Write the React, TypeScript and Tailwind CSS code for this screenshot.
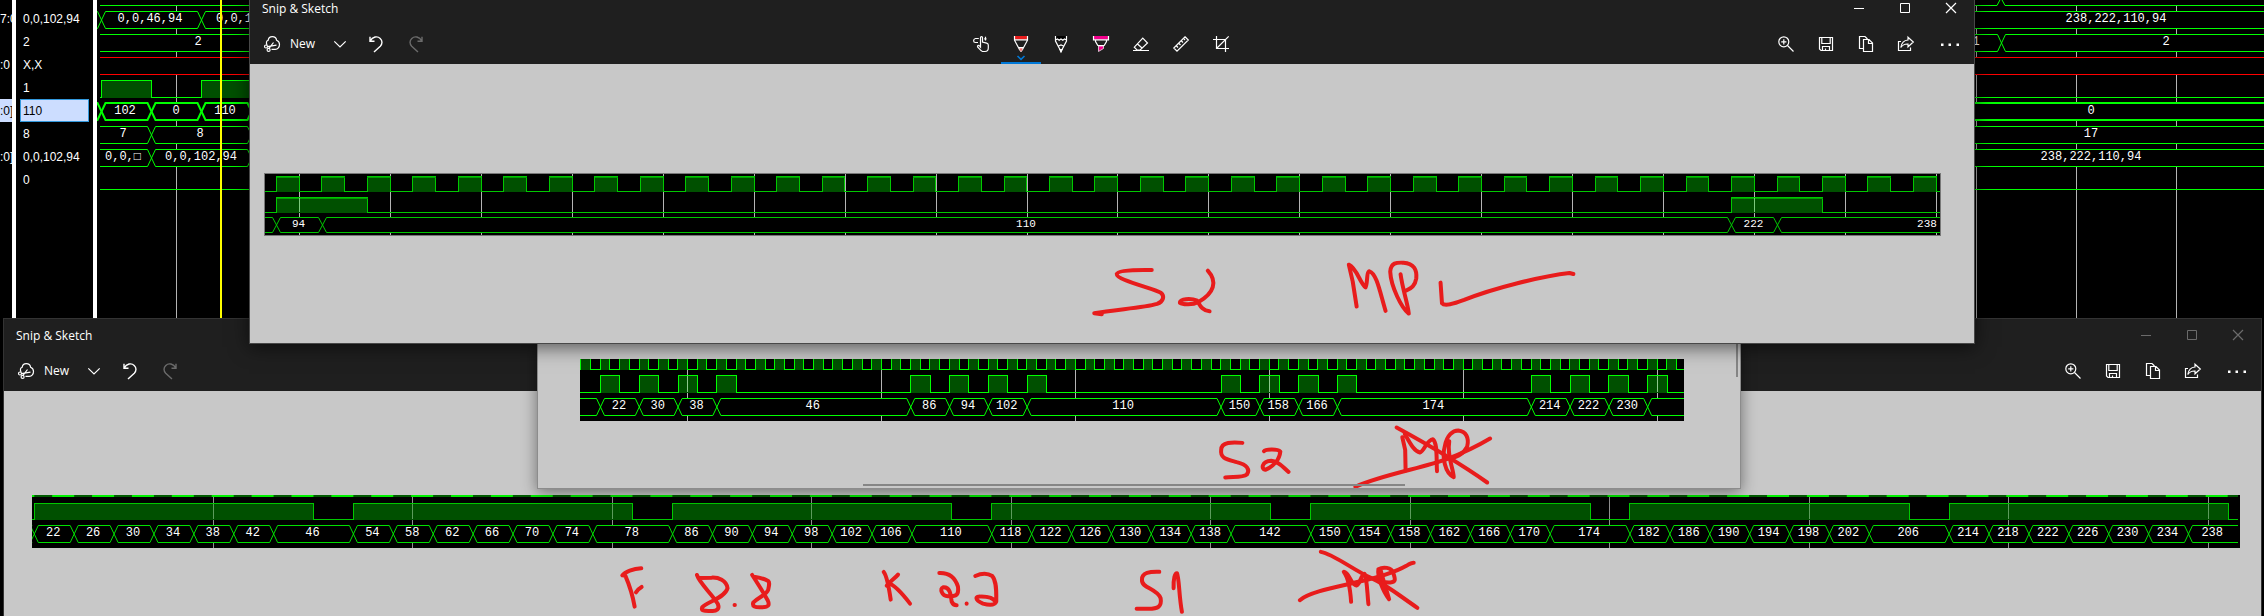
import { type ReactNode } from "react";

const GREEN = "#00ff00";
const MID = "#00c800";
const FILL = "#005000";
const GRID = "#b4b4b4";

type Segment = { from: number; to: number; label?: string; at?: number };

function range(n: number): number[] {
  return Array.from({ length: n }, (_, i) => i);
}

function GridLines({ xs, y1, y2, color = GRID }: { xs: number[]; y1: number; y2: number; color?: string }) {
  return (
    <path
      d={xs.map((x) => `M${x} ${y1}V${y2}`).join("")}
      stroke={color}
      strokeWidth={1}
      fill="none"
      shapeRendering="crispEdges"
    />
  );
}

function Label({ x, y, size = 12, children }: { x: number; y: number; size?: number; children: ReactNode }) {
  return (
    <text x={x} y={y} textAnchor="middle" fontSize={size} fill="#ffffff" className="font-['Liberation_Mono',monospace]">
      {children}
    </text>
  );
}

function Bus({
  segments,
  top,
  bottom,
  openStart = false,
  openEnd = false,
  width = 1,
  size = 12,
  color = GREEN,
}: {
  segments: Segment[];
  top: number;
  bottom: number;
  openStart?: boolean;
  openEnd?: boolean;
  width?: number;
  size?: number;
  color?: string;
}) {
  const mid = (top + bottom) / 2;
  const slant = 4;
  return (
    <g>
      {segments.map((s, i) => {
        const a = i === 0 && openStart;
        const b = i === segments.length - 1 && openEnd;
        const left = a ? `M${s.from} ${top}` : `M${s.from} ${mid}L${s.from + slant} ${top}`;
        const right = b ? `H${s.to}M${s.to} ${bottom}` : `H${s.to - slant}L${s.to} ${mid}L${s.to - slant} ${bottom}`;
        const close = a ? `H${s.from}` : `H${s.from + slant}L${s.from} ${mid}`;
        return (
          <g key={i}>
            <path
              d={`M${s.from + (a ? 0 : slant)} ${top}H${s.to - (b ? 0 : slant)}V${bottom}H${s.from + (a ? 0 : slant)}Z`}
              fill="#000"
            />
            <path d={left + right + close} stroke={color} strokeWidth={width} fill="none" />
          </g>
        );
      })}
      {segments.map((s, i) =>
        s.label ? (
          <Label key={i} x={s.at ?? (s.from + s.to) / 2 - 1} y={mid + 2} size={size}>
            {s.label}
          </Label>
        ) : null,
      )}
    </g>
  );
}

function Bits({
  pulses,
  from,
  to,
  high,
  low,
  color = GREEN,
  thickTop = false,
}: {
  pulses: [number, number][];
  from: number;
  to: number;
  high: number;
  low: number;
  color?: string;
  thickTop?: boolean;
}) {
  const line = `M${from} ${low}` + pulses.map(([a, b]) => `H${a}V${high}H${b}V${low}`).join("") + `H${to}`;
  return (
    <g shapeRendering="crispEdges">
      {pulses.map(([a, b]) => (
        <rect key={a} x={a} y={high} width={b - a} height={low - high} fill={FILL} />
      ))}
      <path d={line} fill="none" stroke={color} strokeWidth={1} />
      {thickTop && (
        <path d={pulses.map(([a, b]) => `M${a} ${high + 1}H${b}`).join("")} fill="none" stroke="#00a000" strokeWidth={1} />
      )}
    </g>
  );
}

function Ink({ transform, paths }: { transform?: string; paths: string[] }) {
  return (
    <g transform={transform} fill="none" stroke="#e81c1c" strokeLinecap="round" strokeLinejoin="round">
      {paths.map((d) => (
        <path key={d} d={d} strokeWidth={4} vectorEffect="non-scaling-stroke" />
      ))}
    </g>
  );
}

/* ---------- background simulator ---------- */

const SIGNALS = [
  { name: "7:0", value: "0,0,102,94" },
  { name: "", value: "2" },
  { name: ":0", value: "X,X" },
  { name: "", value: "1" },
  { name: ":0]", value: "110" },
  { name: "", value: "8" },
  { name: ":0]", value: "0,0,102,94" },
  { name: "", value: "0" },
];

function SimulatorWave() {
  const grid = range(21).map((i) => 176.5 + i * 100);
  return (
    <svg width={2167} height={616} viewBox="97 0 2167 616" className="block shrink-0" role="img" aria-label="Simulation waveform">
      <GridLines xs={grid} y1={0} y2={616} />
      {[-12, 11, 34, 57, 103, 126, 149].map((y) => (
        <rect key={y} x={97} y={y} width={2167} height={17} fill="#000" />
      ))}
      <path d="M100 5.5H1997L2001 -2M2001 -2L2005 5.5H2264M1997 -8L2001 0L2005 -8" stroke={GREEN} fill="none" />
      <Bus
        top={11.5}
        bottom={28.5}
        openEnd
        segments={[
          { from: 92, to: 101.5 },
          { from: 101.5, to: 201.5, label: "0,0,46,94", at: 150 },
          { from: 201.5, to: 302, label: "0,0,1", at: 234 },
          { from: 302, to: 2264, label: "238,222,110,94", at: 2116 },
        ]}
      />
      <Bus
        top={34.5}
        bottom={51.5}
        openStart
        openEnd
        segments={[
          { from: 100, to: 1900, label: "2", at: 198 },
          { from: 1900, to: 2001.5, label: "1", at: 1976 },
          { from: 2001.5, to: 2264, label: "2", at: 2166 },
        ]}
      />
      <path d="M100 57.5H2264M100 74.5H2264" stroke="#ff0000" />
      <Bits pulses={[[101.5, 151.5], [201.5, 251.5]]} from={100} to={2264} high={80.5} low={97.5} />
      <Bus
        top={103}
        bottom={120}
        width={2}
        openEnd
        segments={[
          { from: 90, to: 101.5 },
          { from: 101.5, to: 151.5, label: "102", at: 125 },
          { from: 151.5, to: 201.5, label: "0", at: 176 },
          { from: 201.5, to: 251.5, label: "110", at: 225 },
          { from: 251.5, to: 2264, label: "0", at: 2091 },
        ]}
      />
      <Bus
        top={126.5}
        bottom={143.5}
        openStart
        openEnd
        segments={[
          { from: 100, to: 151.5, label: "7", at: 123 },
          { from: 151.5, to: 251.5, label: "8", at: 200 },
          { from: 251.5, to: 2264, label: "17", at: 2091 },
        ]}
      />
      <Bus
        top={149.5}
        bottom={166.5}
        openStart
        openEnd
        segments={[
          { from: 100, to: 151.5, label: "0,0,□", at: 123 },
          { from: 151.5, to: 251.5, label: "0,0,102,94", at: 201 },
          { from: 251.5, to: 2264, label: "238,222,110,94", at: 2091 },
        ]}
      />
      <path d="M100 189.5H2264" stroke={GREEN} />
      <rect x={220} y={0} width={2} height={616} fill="#ffff00" />
    </svg>
  );
}

function Simulator() {
  return (
    <main className="flex h-full overflow-hidden bg-black font-['Liberation_Sans',sans-serif] text-xs text-white">
      <ul className="flex w-3 shrink-0 flex-col pt-[7px]">
        {SIGNALS.map((s, i) => (
          <li
            key={i}
            className={
              "flex h-[23px] items-center overflow-hidden whitespace-nowrap " +
              (i === 4 ? "bg-[#ccddff] text-black" : "")
            }
          >
            {s.name}
          </li>
        ))}
      </ul>
      <div className="w-1 shrink-0 bg-white" />
      <ul className="flex w-[77px] shrink-0 flex-col px-1 pt-[7px]">
        {SIGNALS.map((s, i) => (
          <li
            key={i}
            className={
              "flex h-[23px] items-center border px-0.5 whitespace-nowrap " +
              (i === 4 ? "border-[#3399dd] bg-[#ccddff] text-black" : "border-transparent")
            }
          >
            {s.value}
          </li>
        ))}
      </ul>
      <div className="w-1 shrink-0 bg-white" />
      <div className="flex-1 overflow-hidden">
        <SimulatorWave />
      </div>
    </main>
  );
}

/* ---------- icons ---------- */

function Icon({ children }: { children: ReactNode }) {
  return (
    <svg
      width={16}
      height={16}
      viewBox="0 0 16 16"
      fill="none"
      stroke="currentColor"
      strokeWidth={1.2}
      className="shrink-0 overflow-visible"
      aria-hidden="true"
    >
      {children}
    </svg>
  );
}

const SnipIcon = () => (
  <Icon>
    <path d="M3 9C1.800 6.500 2.500 4.800 4.200 4.200C4.500 1.900 6.300.6 8.300.6c2.200 0 4 1.500 4.300 3.700C14.400 5 15.500 6.600 15.500 8.600c0 2.600-1.700 4.700-4.200 4.700H7.500" />
    <circle cx="2" cy="10.500" r="1.500" />
    <circle cx="4.600" cy="13.900" r="1.500" />
    <path d="M3.500 10.700L12.500 9.200M5 12.400L9.500 6.500" />
  </Icon>
);
const ChevronIcon = () => (
  <Icon>
    <path d="M2.300 5.300L8 11L13.700 5.300" />
  </Icon>
);
const UndoIcon = () => (
  <Icon>
    <path d="M2 .8V5.300H6.500M2.200 5C4.500.5 9.500-.2 12.200 2.400C14.600 4.700 14.500 8 12.300 10.200L6 16" strokeWidth={1.4} />
  </Icon>
);
const RedoIcon = () => (
  <Icon>
    <path d="M14 .8V5.300H9.500M13.800 5C11.500.5 6.500-.2 3.800 2.400C1.400 4.700 1.500 8 3.700 10.200L10 16" strokeWidth={1.4} />
  </Icon>
);
const TouchIcon = () => (
  <Icon>
    <path d="M7.500 9V1.600a1 1 0 0 1 2 0V6l4.200 1.100c1 .3 1.600 1 1.600 2V12c0 2-1.300 3.500-3.300 3.500H9.500c-1.500-.5-3-2.500-4.800-4.500c-.8-1.500.8-2.200 1.800-1.200L7.500 11V8" />
    <path d="M5.800 2.500H2.500C0 3 0 6.500 2.500 6.500H5M11.200 2.800H13.500M12.500 4.500V.8" />
  </Icon>
);
const PenIcon = () => (
  <Icon>
    <path d="M1 0H15V3.500H1Z" fill="#e81c1c" stroke="none" />
    <path d="M1.500 0V4.200L6.500 13.500M14.500 0V4.200L9.500 13.500M1.500 3.800H14.500M5.800 11.500H10.200" />
    <path d="M6.500 12H9.500V14L8 16L6.500 14Z" fill="#f07070" stroke="#fff" strokeWidth={0.6} />
  </Icon>
);
const PencilIcon = () => (
  <Icon>
    <path d="M2 0H14V3H2Z" fill="#000" stroke="none" />
    <path d="M2.500 0V5L8 15.500L13.500 5V0M2.500 4L4.500 3L6.200 4.200L8 3L9.800 4.200L11.500 3L13.500 4M5.500 10L8 9L10.500 10" />
    <path d="M7 13.500H9L8 15.800Z" fill="currentColor" />
  </Icon>
);
const HighlighterIcon = () => (
  <Icon>
    <path d="M0 0H16V3.500H0Z" fill="#f2008c" stroke="none" />
    <path d="M.5 0V3.800H15.500V0M2.500 4V5.500L4.800 9.500H11.200L13.500 5.500V4" />
    <path d="M5.500 10H10.500V12.500L5.500 15.500Z" fill="#f2008c" stroke="#fff" strokeWidth={0.7} />
  </Icon>
);
const EraserIcon = () => (
  <Icon>
    <path d="M9.800 2.200L14.500 7L7.200 14H4L1.300 11.200ZM4.500 8L9.300 12.300M0 14.500H16" />
  </Icon>
);
const RulerIcon = () => (
  <Icon>
    <path d="M12 .8L15.300 4L4 15.200L.8 12ZM3.500 10L5 11.500M6 7.500L7.500 9M8.500 5L10 6.500M11 2.800L12 4" />
  </Icon>
);
const CropIcon = () => (
  <Icon>
    <path d="M3.500 0V12.500H16M0 3.500H12.500V16M3.500 12.500L15.700.3" />
  </Icon>
);
const ZoomIcon = () => (
  <Icon>
    <circle cx="5.800" cy="5.800" r="5" />
    <path d="M9.500 9.500L15.500 15.500M3.200 5.800H8.400M5.800 3.200V8.400" />
  </Icon>
);
const SaveIcon = () => (
  <Icon>
    <path d="M1.500 1.500H14.500V14.500H3L1.500 13ZM3.800 1.500V7.500H12.200V1.500M4.500 14.500V10.500H11.500V14.500M7.500 14.500V12.500" />
  </Icon>
);
const CopyIcon = () => (
  <Icon>
    <path d="M5.500 12.500H1.500V.5H7L9.500 3M5.500 3.500H11L14.500 7V15.500H5.500ZM10.500 3.500V7.500H14.500" />
  </Icon>
);
const ShareIcon = () => (
  <Icon>
    <path d="M3 5.500H.5V14.500H12.500V11.500M10 1.200L15.300 6L10 10.800V8C6.500 7.800 4.500 9 2.800 11.500C3.500 7 6 4.300 10 4Z" />
  </Icon>
);
const MoreIcon = () => (
  <svg width={18} height={16} viewBox="0 0 18 16" fill="currentColor" aria-hidden="true">
    <path d="M0 7.500h2.500v2.500H0zM7.500 7.500h2.500v2.500H7.500zM15.500 7.500h2.500v2.500h-2.500z" />
  </svg>
);
const MinimizeIcon = () => (
  <Icon>
    <path d="M3 8.500H13" strokeWidth={1} />
  </Icon>
);
const MaximizeIcon = () => (
  <Icon>
    <path d="M3.500 3.500H12.500V12.500H3.500Z" strokeWidth={1} />
  </Icon>
);
const CloseIcon = () => (
  <Icon>
    <path d="M3 3L13 13M13 3L3 13" />
  </Icon>
);

/* ---------- Snip & Sketch window ---------- */

function ToolButton({ label, children, className = "w-10" }: { label: string; children: ReactNode; className?: string }) {
  return (
    <button type="button" aria-label={label} className={"flex h-10 shrink-0 items-center justify-center " + className}>
      {children}
    </button>
  );
}

function SketchHeader({ active }: { active: boolean }) {
  return (
    <header className="bg-[#1f1f1f] font-['Open_Sans','Noto_Sans',sans-serif] text-white">
      <div className="flex h-8 items-center">
        <h2 className="flex-1 pt-0.5 pl-3 text-xs">Snip &amp; Sketch</h2>
        <div className={"flex " + (active ? "text-white" : "text-[#6b6b6b]")}>
          <button type="button" aria-label="Minimize" className="flex h-8 w-[46px] items-center justify-center">
            <MinimizeIcon />
          </button>
          <button type="button" aria-label="Maximize" className="flex h-8 w-[46px] items-center justify-center">
            <MaximizeIcon />
          </button>
          <button type="button" aria-label="Close" className="flex h-8 w-[46px] items-center justify-center">
            <CloseIcon />
          </button>
        </div>
      </div>
      <div className="flex h-10 items-center">
        <button type="button" className="flex h-10 w-[74px] items-center gap-2.5 pl-3.5 text-xs">
          <SnipIcon />
          New
        </button>
        <ToolButton label="Snip delay" className="w-8">
          <ChevronIcon />
        </ToolButton>
        <ToolButton label="Undo">
          <UndoIcon />
        </ToolButton>
        <ToolButton label="Redo" className="w-10 text-[#6b6b6b]">
          <RedoIcon />
        </ToolButton>
        <div className="flex flex-1 justify-center">
          <ToolButton label="Touch writing">
            <TouchIcon />
          </ToolButton>
          <ToolButton label="Ballpoint pen" className="relative w-10">
            <PenIcon />
            <svg width={40} height={10} viewBox="0 0 40 10" className="absolute bottom-0 left-0" fill="none" aria-hidden="true">
              <path d="M16.500 2L20 5.300L23.500 2" stroke="#0078d7" strokeWidth={1.6} />
              <path d="M0 8H40V10H0Z" fill="#0078d7" />
            </svg>
          </ToolButton>
          <ToolButton label="Pencil">
            <PencilIcon />
          </ToolButton>
          <ToolButton label="Highlighter">
            <HighlighterIcon />
          </ToolButton>
          <ToolButton label="Eraser">
            <EraserIcon />
          </ToolButton>
          <ToolButton label="Ruler">
            <RulerIcon />
          </ToolButton>
          <ToolButton label="Crop">
            <CropIcon />
          </ToolButton>
        </div>
        <ToolButton label="Zoom">
          <ZoomIcon />
        </ToolButton>
        <ToolButton label="Save">
          <SaveIcon />
        </ToolButton>
        <ToolButton label="Copy">
          <CopyIcon />
        </ToolButton>
        <ToolButton label="Share">
          <ShareIcon />
        </ToolButton>
        <ToolButton label="See more" className="w-12">
          <MoreIcon />
        </ToolButton>
      </div>
    </header>
  );
}

/* ---------- drawings ---------- */

function TopSketch() {
  const clock = range(37).map((k): [number, number] => [276.5 + k * 45.47, 299.3 + k * 45.47]);
  const grid = range(19).map((i) => 299.5 + i * 90.94);
  return (
    <svg width={1724} height={279} viewBox="250 64 1724 279" className="block" role="img" aria-label="Waveform S2, MP passed">
      <rect x={264.5} y={173.5} width={1676} height={62} fill="#000" stroke="#787878" />
      <GridLines xs={grid} y1={174} y2={235} />
      <Bits pulses={clock} from={265} to={1940} high={176.5} low={191.5} color={MID} thickTop />
      <Bits pulses={[[276.5, 367.5], [1731.5, 1822.5]]} from={265} to={1940} high={197.5} low={212.5} color={MID} thickTop />
      <GridLines xs={[299.5, 1754.4]} y1={198} y2={212} color="#7cc87c" />
      <Bus
        top={217.5}
        bottom={232.5}
        openStart
        openEnd
        size={11}
        color={MID}
        segments={[
          { from: 265, to: 276.5 },
          { from: 276.5, to: 322.5, label: "94" },
          { from: 322.5, to: 1731.5, label: "110" },
          { from: 1731.5, to: 1777.5, label: "222" },
          { from: 1777.5, to: 1940, label: "238", at: 1927 },
        ]}
      />
      <Ink
        transform="translate(1050 240) scale(0.357 0.333)"
        paths={[
          "M285 90C230 89 190 92 187 102C185 120 290 145 310 158C322 168 318 185 300 192C260 205 180 208 124 220L145 223",
          "M442 92C470 125 460 160 415 187C400 195 372 195 364 189C362 176 395 174 412 182C420 195 425 212 447 214",
          "M859 200L848 125L837 74C860 85 868 130 884 142C890 130 886 95 895 94C915 100 925 160 940 213",
          "M982 103C988 150 1002 190 1005 221C985 205 955 140 953 95C955 65 975 68 990 68C1020 70 1028 90 1026 115C1022 140 1010 145 998 152",
          "M1094 128L1098 190C1105 200 1130 192 1160 180C1240 145 1380 108 1455 99L1466 102",
        ]}
      />
    </svg>
  );
}

const MIDDLE_VALUES = [22, 30, 38, 46, 86, 94, 102, 110, 150, 158, 166, 174, 214, 222, 230, 238];

function MiddleSketch() {
  const at = (v: number) => 600.5 + (v - 22) * 4.848;
  const clock = range(57).map((k): [number, number] => [580.9 + k * 19.39, 590.6 + k * 19.39]);
  const grid = range(6).map((i) => 687.5 + i * 194);
  const segments: Segment[] = [{ from: 580, to: at(22) }];
  MIDDLE_VALUES.forEach((v, i) => {
    const next = MIDDLE_VALUES[i + 1];
    segments.push(next ? { from: at(v), to: at(next), label: String(v) } : { from: at(v), to: 1684 });
  });
  return (
    <svg width={1202} height={145} viewBox="538 343 1202 145" className="block" role="img" aria-label="Waveform S2, MP failed">
      <defs>
        <clipPath id="middle-clip">
          <path d="M580 359H1684V421H580Z" />
        </clipPath>
      </defs>
      <g clipPath="url(#middle-clip)">
        <rect x={580} y={359} width={1104} height={62} fill="#000" />
        <GridLines xs={grid} y1={370} y2={421} />
        <Bits pulses={clock} from={580} to={1684} high={352.5} low={369.5} />
        <Bits
          pulses={MIDDLE_VALUES.map((v): [number, number] => [at(v), at(v + 4)])}
          from={580}
          to={1684}
          high={375.5}
          low={392.5}
        />
        <GridLines xs={[687.5, 1269.5, 1657.5]} y1={376} y2={392} color="#8cc88c" />
        <Bus top={398.5} bottom={415.5} openStart openEnd segments={segments} />
      </g>
      <Ink
        transform="translate(1100 310) scale(0.408 0.333)"
        paths={[
          "M349 399C325 396 297 396 297 420C294 445 310 448 335 457C362 465 368 480 360 494C350 504 325 500 307 503",
          "M402 424C405 418 435 416 442 425C440 450 425 470 405 480C395 478 395 455 420 453C440 455 450 475 462 486",
          "M749 482L748 420L741 382M747 372C760 400 770 425 784 428C795 425 800 390 816 388C828 400 824 450 826 484",
          "M856 394C850 440 865 470 867 502C845 490 838 440 845 410C850 375 865 362 878 362C898 365 905 385 900 410C890 435 870 445 855 446",
          "M727 353C790 395 870 450 949 518",
          "M956 386C930 405 900 425 850 448C790 475 690 495 626 531",
        ]}
      />
      <path d="M863 484H1405V486H863ZM1736 343H1738V377H1736Z" fill="#858585" />
    </svg>
  );
}

function BottomSketch() {
  const at = (v: number) => 34.3 + (v - 22) * 9.973;
  const groups = range(7).map((g) => 22 + g * 32);
  const values = groups.flatMap((g) => range(7).map((i) => g + i * 4));
  const segments: Segment[] = [{ from: 28, to: at(22) }];
  values.forEach((v, i) => {
    const next = values[i + 1];
    segments.push({ from: at(v), to: next ? at(next) : 2238, label: String(v) });
  });
  const grid = range(11).map((i) => 213.5 + i * 199.48);
  return (
    <svg
      width={2257}
      height={225}
      viewBox="4 391 2257 225"
      className="block"
      role="img"
      aria-label="Waveform F 8.8, K 2.2, S1, MP failed"
    >
      <defs>
        <clipPath id="bottom-clip">
          <path d="M32 495H2240V548H32Z" />
        </clipPath>
      </defs>
      <g clipPath="url(#bottom-clip)">
        <rect x={32} y={495} width={2208} height={53} fill="#000" />
        <path d="M32 496H2238" stroke="#005a00" strokeWidth={2} />
        <GridLines xs={grid} y1={497} y2={548} color="#909090" />
        <path d={range(56).map((k) => `M${12.3 + k * 39.88} 496h22`).join("")} stroke="#00f000" strokeWidth={2} />
        <Bits
          pulses={groups.map((g): [number, number] => [at(g), at(g + 28)])}
          from={32}
          to={2238}
          high={503.5}
          low={519.5}
          color={MID}
        />
        <GridLines xs={grid.filter((_, i) => i !== 7)} y1={504} y2={519} color="#5c9c5c" />
        <Bus top={525.5} bottom={542.5} openEnd segments={segments} color="#00e000" />
      </g>
      <Ink
        transform="translate(600 550) scale(0.333 0.333)"
        paths={[
          "M124 55C100 56 75 65 67 76L76 77C88 105 98 135 104 170M125 111C118 115 112 121 108 127",
          "M291 75C300 102 335 130 354 162C360 178 350 184 335 183C310 184 303 182 307 172C320 155 375 145 383 115C380 90 355 82 335 83L296 84",
          "M404 165L405 165",
          "M457 75C470 95 492 130 503 150C510 165 508 172 485 172C465 173 457 170 460 158C475 142 500 135 505 120C508 105 510 98 505 93C490 85 475 82 462 80",
          "M852 66C862 78 868 115 873 149M895 74C885 86 870 95 861 107M864 98C885 105 915 140 931 161",
          "M1019 69C1045 68 1065 78 1075 110C1078 135 1070 140 1045 139C1025 138 1020 115 1030 112C1050 110 1053 130 1056 155C1060 164 1065 166 1071 166",
          "M1101 161L1101 161.500",
          "M1127 78C1145 70 1165 70 1178 78C1192 95 1190 130 1190 155C1185 168 1165 165 1150 161C1125 150 1125 138 1145 140C1165 140 1180 142 1188 156",
        ]}
      />
      <Ink
        transform="translate(1120 420) scale(0.333 0.333)"
        paths={[
          "M118 456C90 455 65 458 66 480C64 505 110 505 122 535C126 560 115 567 85 567L50 567",
          "M161 505C160 475 165 460 171 460C178 475 177 530 186 576",
          "M694 546C692 515 686 475 672 456C690 458 692 495 710 497C722 494 722 465 734 462C742 475 742 515 746 553",
          "M808 538C790 515 772 470 776 448C790 440 815 442 820 458C828 480 828 486 812 488C798 490 790 485 782 481M782 448C790 480 800 510 808 538",
          "M603 396C640 402 700 450 755 475C800 495 840 528 893 564",
          "M540 541C570 515 660 500 720 485C780 472 830 455 860 438C870 432 876 429 882 429",
        ]}
      />
    </svg>
  );
}

export default function App() {
  return (
    <div className="relative h-screen overflow-hidden bg-black">
      <Simulator />
      <section className="absolute top-[318px] right-0.5 left-[3px] overflow-hidden border border-[#333333] bg-[#c8c8c8]">
        <SketchHeader active={false} />
        <div className="overflow-hidden">
          <BottomSketch />
        </div>
      </section>
      <section className="absolute top-[342px] right-[523px] left-[537px] border border-[#8c8c8c] bg-[#c8c8c8] shadow-[0_3px_14px_rgba(0,0,0,0.45)]">
        <div className="overflow-hidden">
          <MiddleSketch />
        </div>
      </section>
      <section className="absolute -top-[9px] right-[289px] left-[249px] border border-[#484848] bg-[#c8c8c8] shadow-[0_3px_18px_rgba(0,0,0,0.6)]">
        <SketchHeader active />
        <div className="overflow-hidden">
          <TopSketch />
        </div>
      </section>
    </div>
  );
}
